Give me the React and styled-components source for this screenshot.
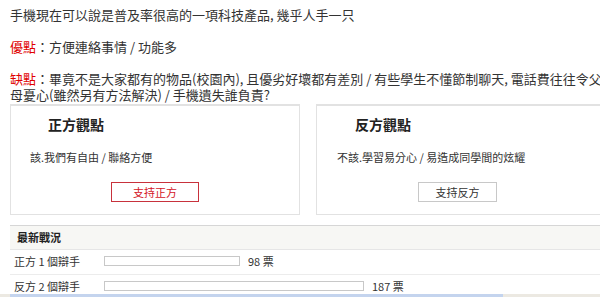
import React from "react";
import styled, { createGlobalStyle } from "styled-components";

const Global = createGlobalStyle`
  html, body { margin: 0; padding: 0; background: #fff; }
  body { font-family: "Noto Sans CJK TC", "Liberation Sans", sans-serif; color: #333; }
  #root { width: 600px; height: 297px; overflow: hidden; }
`;

const Page = styled.div`
  width: 640px;
  padding: 7px 0 0 10px;
  box-sizing: border-box;
`;

const Para = styled.p`
  margin: 0 0 ${(p) => (p.$last ? "1px" : "16px")};
  font-size: 13px;
  line-height: 16px;
`;

const Tag = styled.span`
  color: #e00000;
`;

const Debate = styled.div`
  display: flex;
  gap: 16px;
`;

const Card = styled.div`
  width: 290px;
  height: 111px;
  box-sizing: border-box;
  border: 1px solid #e2e2e2;
  border-top: 2px solid #e2e2e2;
  display: flex;
  flex-direction: column;
  padding: 8px 0 0;
`;

const CardTitle = styled.h3`
  margin: 0;
  padding-left: ${(p) => p.$indent}px;
  font-family: "Noto Sans CJK TC", serif;
  font-size: 14px;
  font-weight: 700;
  line-height: 20px;
  color: #222;
`;

const CardText = styled.div`
  margin-top: 16px;
  padding-left: ${(p) => p.$indent}px;
  font-size: 11px;
  line-height: 14px;
  color: #333;
`;

const VoteButton = styled.button`
  align-self: center;
  margin: 18px 0 0 ${(p) => p.$shift}px;
  width: ${(p) => p.$w}px;
  height: 20px;
  padding: 0;
  background: #fff;
  border: 1px solid ${(p) => (p.$red ? "#c8323c" : "#c8c8c8")};
  color: ${(p) => (p.$red ? "#d4141e" : "#333")};
  font-family: "Noto Sans CJK TC", sans-serif;
  font-size: 11px;
  line-height: 18px;
`;

const Section = styled.div`
  margin-top: 10px;
  width: 600px;
  border-top: 1px solid #d6d6d6;
`;

const SectionHead = styled.div`
  height: 23px;
  background: #f7f7f4;
  border-bottom: 1px solid #e6e6e6;
  padding-left: 7px;
  font-size: 11px;
  font-weight: 700;
  line-height: 23px;
  color: #222;
`;

const Row = styled.div`
  height: 25px;
  padding-bottom: 2px;
  box-sizing: border-box;
  border-bottom: 1px solid #ececec;
  display: flex;
  align-items: center;
  font-size: 11px;
  color: #333;
`;

const RowLabel = styled.span`
  width: 94px;
  padding-left: 4px;
  box-sizing: border-box;
`;

const Bar = styled.div`
  height: 10px;
  box-sizing: border-box;
  border: 1px solid #c8c8c8;
  background: #fff;
`;

const Votes = styled.span`
  margin-left: 8px;
`;

const ScrollBar = styled.div`
  position: fixed;
  left: 0;
  right: 0;
  bottom: 0;
  height: 3px;
  background: #ece9e2;
  display: flex;
`;

const Thumb = styled.div`
  margin-left: 10px;
  width: 493px;
  background: #c4d4ee;
`;

const tally = [
  { label: "正方 1 個辯手", votes: 98 },
  { label: "反方 2 個辯手", votes: 187 },
];

export default function App() {
  return (
    <>
      <Global />
      <Page>
        <Para>手機現在可以說是普及率很高的一項科技產品, 幾乎人手一只</Para>
        <Para>
          <Tag>優點</Tag>：方便連絡事情 / 功能多
        </Para>
        <Para $last>
          <Tag>缺點</Tag>：畢竟不是大家都有的物品(校園內), 且優劣好壞都有差別 / 有些學生不懂節制聊天, 電話費往往令父
          <br />
          母憂心(雖然另有方法解決) / 手機遺失誰負責?
        </Para>
        <Debate>
          <Card>
            <CardTitle $indent={37}>正方觀點</CardTitle>
            <CardText $indent={19}>該.我們有自由 / 聯絡方便</CardText>
            <VoteButton $red $w={88} $shift={0}>支持正方</VoteButton>
          </Card>
          <Card>
            <CardTitle $indent={38}>反方觀點</CardTitle>
            <CardText $indent={20}>不該.學習易分心 / 易造成同學間的炫耀</CardText>
            <VoteButton $w={79} $shift={-7}>支持反方</VoteButton>
          </Card>
        </Debate>
        <Section>
          <SectionHead>最新戰況</SectionHead>
          {tally.map((t) => (
            <Row key={t.label}>
              <RowLabel>{t.label}</RowLabel>
              <Bar style={{ width: Math.round(t.votes * 1.39) }} />
              <Votes>{t.votes} 票</Votes>
            </Row>
          ))}
        </Section>
      </Page>
      <ScrollBar>
        <Thumb />
      </ScrollBar>
    </>
  );
}
